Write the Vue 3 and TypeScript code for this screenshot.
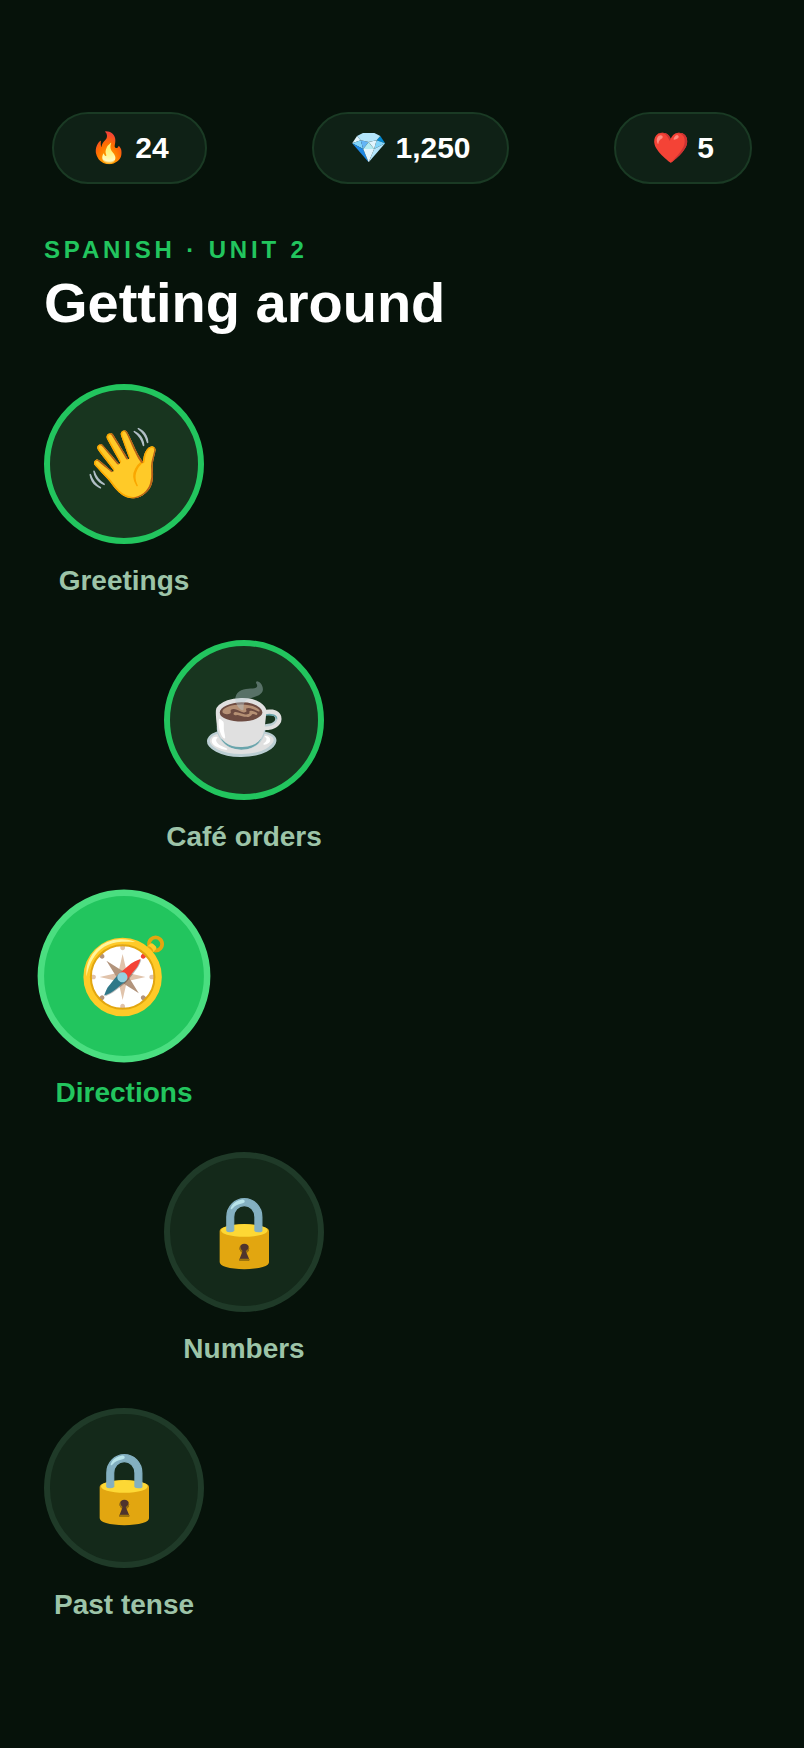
<script setup lang="ts">
interface Stat { icon: string; value: string; label: string }
interface Lesson { icon: string; name: string; state: 'done' | 'current' | 'locked' }

const stats: Stat[] = [
  { icon: '🔥', value: '24', label: 'Streak' },
  { icon: '💎', value: '1,250', label: 'Gems' },
  { icon: '❤️', value: '5', label: 'Hearts' },
]
const lessons: Lesson[] = [
  { icon: '👋', name: 'Greetings', state: 'done' },
  { icon: '☕', name: 'Café orders', state: 'done' },
  { icon: '🧭', name: 'Directions', state: 'current' },
  { icon: '🔒', name: 'Numbers', state: 'locked' },
  { icon: '🔒', name: 'Past tense', state: 'locked' },
]
</script>

<template>
  <main class="screen">
    <div class="stats">
      <div v-for="s in stats" :key="s.label" class="pill">{{ s.icon }} {{ s.value }}</div>
    </div>
    <header class="heading">
      <p class="unit">SPANISH · UNIT 2</p>
      <h1>Getting around</h1>
    </header>
    <ol class="path">
      <li v-for="l in lessons" :key="l.name" class="lesson" :class="l.state">
        <button type="button" class="node" :aria-label="l.name">{{ l.icon }}</button>
        <span class="name">{{ l.name }}</span>
      </li>
    </ol>
  </main>
</template>

<style>
body {
  margin: 0;
  background: #06120a;
}
</style>

<style scoped>
.screen {
  box-sizing: border-box;
  min-height: 100vh;
  padding: 112px 44px 88px;
  background: #06120a;
  color: #fff;
  font-family: "Liberation Sans", Arial, sans-serif;
}
.stats {
  display: flex;
  justify-content: space-between;
  padding: 0 8px;
}
.pill {
  padding: 18px 36px;
  border: 2px solid #1a3a24;
  border-radius: 40px;
  background: #0f2116;
  font-size: 30px;
  font-weight: 700;
  line-height: 32px;
}
.heading {
  margin-top: 52px;
}
.unit {
  margin: 0;
  color: #22c55e;
  font-size: 24px;
  font-weight: 700;
  letter-spacing: 0.16em;
  line-height: 28px;
}
h1 {
  margin: 8px 0 0;
  font-size: 56px;
  font-weight: 700;
  line-height: 62px;
}
.path {
  display: flex;
  flex-direction: column;
  align-items: flex-start;
  gap: 42px;
  margin: 50px 0 0;
  padding: 0;
  list-style: none;
}
.lesson {
  display: flex;
  flex-direction: column;
  align-items: center;
  gap: 20px;
  min-width: 160px;
}
.lesson:nth-child(even) {
  margin-left: 120px;
}
.node {
  box-sizing: border-box;
  width: 160px;
  height: 160px;
  padding: 0;
  border: 6px solid #22c55e;
  border-radius: 50%;
  background: #18351f;
  color: #fff;
  font-family: inherit;
  font-size: 68px;
}
.name {
  color: #9dc4a8;
  font-size: 28px;
  font-weight: 700;
  line-height: 34px;
}
.current .node {
  border-color: #4ade80;
  background: #22c55e;
  transform: scale(1.08);
}
.current .name {
  color: #22c55e;
}
.locked .node {
  border-color: #1f3a28;
  background: #14291a;
}
</style>
